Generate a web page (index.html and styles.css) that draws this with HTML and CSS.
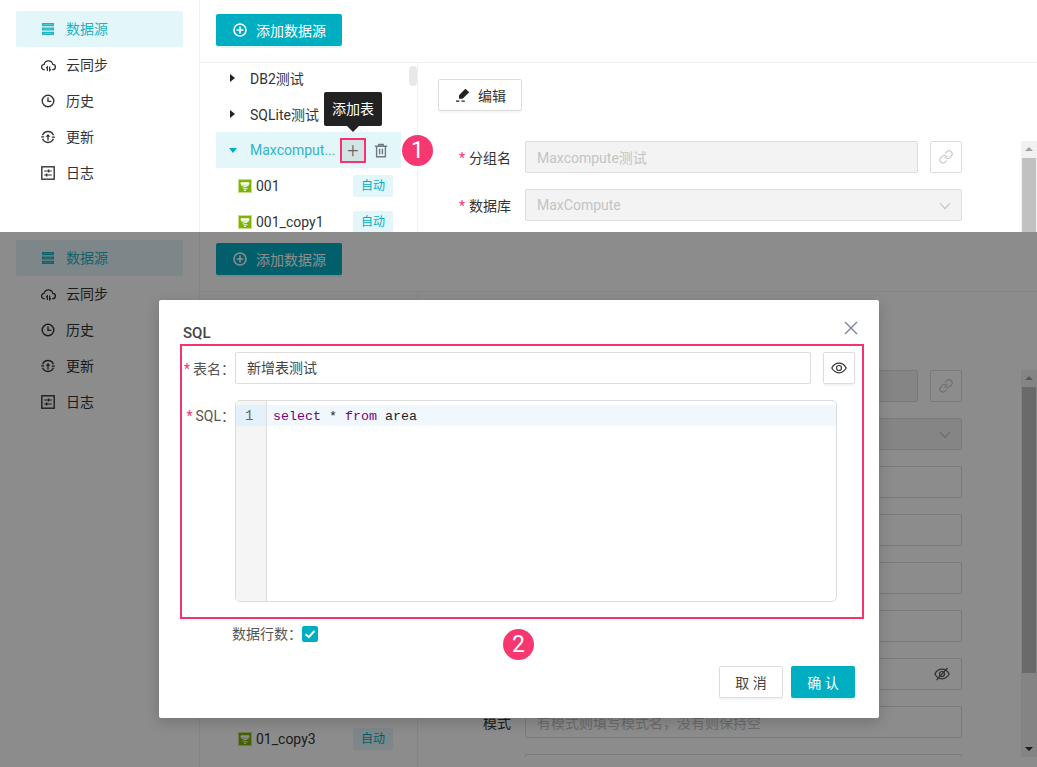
FILE: index.html
```html
<!DOCTYPE html>
<html lang="zh-CN">
<head>
<meta charset="utf-8">
<title>数据源</title>
<link rel="stylesheet" href="styles.css">
</head>
<body>
<svg class="defs" width="0" height="0" aria-hidden="true">
  <symbol id="i-db" viewBox="0 0 12 12"><path d="M0 0h12v3.2H0zM0 4.4h12v3.2H0zM0 8.8h12V12H0z" fill="currentColor"/><path d="M1.5 1.6h9M1.5 6h9M1.5 10.4h9" stroke="#fff" stroke-opacity=".35" stroke-width=".8"/></symbol>
  <symbol id="i-cloud" viewBox="0 0 16 14"><path d="M4 11.5H3.6A2.9 2.9 0 0 1 3.3 5.7 4.8 4.8 0 0 1 12.6 5.7a2.9 2.9 0 0 1-.2 5.8H12" fill="none" stroke="currentColor" stroke-width="1.4"/><path d="M6.8 13V8.5L5.4 9.8M9.2 8v4.5l1.4-1.3" fill="none" stroke="currentColor" stroke-width="1.3"/></symbol>
  <symbol id="i-clock" viewBox="0 0 14 14"><circle cx="7" cy="7" r="5.8" fill="none" stroke="currentColor" stroke-width="1.4"/><path d="M7 3.6V7.4H10.4" fill="none" stroke="currentColor" stroke-width="1.4"/></symbol>
  <symbol id="i-update" viewBox="0 0 14 14"><path d="M1.6 5.2A5.8 5.8 0 0 1 12.4 5.2M12.4 8.8A5.8 5.8 0 0 1 1.6 8.8" fill="none" stroke="currentColor" stroke-width="1.4"/><path d="M.2 6.8h3M10.8 7.2h3M7 10.6V5" fill="none" stroke="currentColor" stroke-width="1.3"/><path d="M4.6 6.8 7 4l2.4 2.8z" fill="currentColor"/></symbol>
  <symbol id="i-log" viewBox="0 0 14 14"><rect x=".8" y=".8" width="12.4" height="12.4" fill="none" stroke="currentColor" stroke-width="1.4"/><path d="M3.2 5h7.6M3.2 9h7.6" stroke="currentColor" stroke-width="1.2"/><path d="M7.6 3.6v2.8M5.6 7.6v2.8" stroke="currentColor" stroke-width="1.4"/></symbol>
  <symbol id="i-add" viewBox="0 0 14 14"><circle cx="7" cy="7" r="6" fill="none" stroke="currentColor" stroke-width="1.6"/><path d="M7 3.6v6.8M3.6 7h6.8" stroke="currentColor" stroke-width="1.6"/></symbol>
  <symbol id="i-table" viewBox="0 0 14 14"><rect width="14" height="14" fill="#c6e08a"/><rect x="1" y="1" width="12" height="12" fill="#7cb305"/><path d="M3 3.8h8v1.4H3zM3.4 6.2h7.2M4.6 8.2l5-1.2M5.4 9.8h4M6 11.4h2" fill="#fff" stroke="#fff" stroke-width="1"/></symbol>
  <symbol id="i-trash" viewBox="0 0 14 14"><path d="M.8 2.8h12.4M4.8 2.8V1h4.4v1.8" fill="none" stroke="currentColor" stroke-width="1.4"/><path d="M2.6 2.8v10.4h8.8V2.8" fill="none" stroke="currentColor" stroke-width="1.4"/><path d="M5.6 5.2v5.6M8.4 5.2v5.6" stroke="currentColor" stroke-width="1.4"/></symbol>
  <symbol id="i-pen" viewBox="0 0 14 14"><path d="M9.4.8 13.2 4.2 6.6 10.8H3V7.2z" fill="currentColor"/><path d="M0 13.2h3.4M5.4 13.2h3.4" stroke="currentColor" stroke-width="1.2"/></symbol>
  <symbol id="i-link" viewBox="0 0 16 16"><path d="M6.6 9.4 9.4 6.6M7.2 4.4l1.6-1.6a3 3 0 0 1 4.4 4.4l-1.6 1.6a3 3 0 0 1-3.4.6M8.8 11.6l-1.6 1.6a3 3 0 0 1-4.4-4.4l1.6-1.6a3 3 0 0 1 3.4-.6" fill="none" stroke="currentColor" stroke-width="1.2"/></symbol>
  <symbol id="i-chev" viewBox="0 0 12 8"><path d="M1 1l5 5.6L11 1" fill="none" stroke="currentColor" stroke-width="1.1"/></symbol>
  <symbol id="i-eye" viewBox="0 0 16 12"><path d="M.8 6C2.6 2.8 5 1.2 8 1.2S13.4 2.8 15.2 6C13.4 9.2 11 10.8 8 10.8S2.6 9.2.8 6z" fill="none" stroke="currentColor" stroke-width="1.2"/><circle cx="8" cy="6" r="2.5" fill="none" stroke="currentColor" stroke-width="1.2"/></symbol>
  <symbol id="i-eyeoff" viewBox="0 0 16 14"><path d="M.8 7C2.6 3.8 5 2.2 8 2.2S13.4 3.8 15.2 7C13.4 10.2 11 11.8 8 11.8S2.6 10.2.8 7z" fill="none" stroke="currentColor" stroke-width="1.2"/><circle cx="8" cy="7" r="2.5" fill="none" stroke="currentColor" stroke-width="1.2"/><path d="M13.5 .8 2.5 13.2" stroke="currentColor" stroke-width="1.2"/></symbol>
</svg>

<div class="frame frame-top">
  <div class="app">
    <aside class="side">
      <a class="nav nav-on"><svg class="nav-ic"><use href="#i-db"/></svg>数据源</a>
      <a class="nav"><svg class="nav-ic nav-wide"><use href="#i-cloud"/></svg>云同步</a>
      <a class="nav"><svg class="nav-ic"><use href="#i-clock"/></svg>历史</a>
      <a class="nav"><svg class="nav-ic"><use href="#i-update"/></svg>更新</a>
      <a class="nav"><svg class="nav-ic"><use href="#i-log"/></svg>日志</a>
    </aside>
    <main class="main">
      <div class="bar"><button class="btn-add"><svg class="add-ic"><use href="#i-add"/></svg>添加数据源</button></div>
      <div class="body">
        <section class="tree">
          <div class="tree-clip">
            <div class="row"><i class="caret"></i><span class="rname">DB2测试</span></div>
            <div class="row"><i class="caret"></i><span class="rname">SQLite测试</span></div>
            <div class="row row-on">
              <i class="caret caret-open"></i><span class="rname rname-on">Maxcomput...</span>
              <span class="act act-marked">+
                <span class="tip">添加表</span>
              </span>
              <svg class="trash"><use href="#i-trash"/></svg>
              <span class="num num-1">1</span>
            </div>
            <div class="row leaf"><svg class="tb"><use href="#i-table"/></svg><span class="lname">001</span><span class="tag">自动</span></div>
            <div class="row leaf"><svg class="tb"><use href="#i-table"/></svg><span class="lname">001_copy1</span><span class="tag">自动</span></div>
          </div>
          <span class="tree-thumb"></span>
        </section>
        <section class="detail">
          <button class="btn-edit"><svg class="pen"><use href="#i-pen"/></svg>编辑</button>
          <div class="form-wrap">
            <div class="form">
              <div class="frow"><label class="flabel"><b>*</b>分组名</label><div class="field dis grow">Maxcompute测试</div><span class="linkbtn"><svg class="link-ic"><use href="#i-link"/></svg></span></div>
              <div class="frow"><label class="flabel"><b>*</b>数据库</label><div class="field dis grow">MaxCompute<svg class="chev"><use href="#i-chev"/></svg></div></div>
            </div>
            <div class="sb"><i class="sb-up"></i><span class="sb-thumb"></span><i class="sb-down"></i></div>
          </div>
        </section>
      </div>
    </main>
  </div>
</div>

<div class="frame frame-bottom">
  <div class="app app-under">
    <aside class="side">
      <a class="nav nav-on"><svg class="nav-ic"><use href="#i-db"/></svg>数据源</a>
      <a class="nav"><svg class="nav-ic nav-wide"><use href="#i-cloud"/></svg>云同步</a>
      <a class="nav"><svg class="nav-ic"><use href="#i-clock"/></svg>历史</a>
      <a class="nav"><svg class="nav-ic"><use href="#i-update"/></svg>更新</a>
      <a class="nav"><svg class="nav-ic"><use href="#i-log"/></svg>日志</a>
    </aside>
    <main class="main">
      <div class="bar"><button class="btn-add"><svg class="add-ic"><use href="#i-add"/></svg>添加数据源</button></div>
      <div class="body">
        <section class="tree">
          <div class="tree-clip">
            <div class="row"></div><div class="row"></div><div class="row"></div>
            <div class="row"></div><div class="row"></div><div class="row"></div>
            <div class="row"></div><div class="row"></div><div class="row"></div>
            <div class="row"></div><div class="row"></div><div class="row"></div>
            <div class="row leaf"><svg class="tb"><use href="#i-table"/></svg><span class="lname">01_copy3</span><span class="tag">自动</span></div>
          </div>
        </section>
        <section class="detail">
          <div class="btn-space"></div>
          <div class="form-wrap">
            <div class="form">
              <div class="frow"><label class="flabel"></label><div class="field dis grow"></div><span class="linkbtn"><svg class="link-ic"><use href="#i-link"/></svg></span></div>
              <div class="frow"><label class="flabel"></label><div class="field dis grow"><svg class="chev"><use href="#i-chev"/></svg></div></div>
              <div class="frow"><label class="flabel"></label><div class="field grow"></div></div>
              <div class="frow"><label class="flabel"></label><div class="field grow"></div></div>
              <div class="frow"><label class="flabel"></label><div class="field grow"></div></div>
              <div class="frow"><label class="flabel"></label><div class="field grow"></div></div>
              <div class="frow"><label class="flabel"></label><div class="field grow"><svg class="eyeoff"><use href="#i-eyeoff"/></svg></div></div>
              <div class="frow"><label class="flabel">模式</label><div class="field grow ph">有模式则填写模式名，没有则保持空</div></div>
              <div class="frow"><label class="flabel"></label><div class="field grow"></div></div>
            </div>
            <div class="sb"><i class="sb-up"></i><span class="sb-thumb"></span><i class="sb-down"></i></div>
          </div>
        </section>
      </div>
    </main>
  </div>

  <div class="overlay">
    <div class="modal">
      <header class="m-head"><span class="m-title">SQL</span><svg class="m-close" viewBox="0 0 14 14"><path d="M1 1l12 12M13 1 1 13" fill="none" stroke="currentColor" stroke-width="1.3"/></svg></header>
      <div class="m-marked">
        <div class="m-row">
          <label class="m-label"><b>*</b>表名：</label>
          <div class="m-input">新增表测试</div>
          <span class="m-eye"><svg class="eye"><use href="#i-eye"/></svg></span>
        </div>
        <div class="m-row m-row-editor">
          <label class="m-label m-label-sql"><b>*</b>SQL：</label>
          <div class="editor">
            <div class="gutter"><span class="ln">1</span></div>
            <div class="code"><div class="line"><span class="kw">select</span> * <span class="kw">from</span> area</div></div>
          </div>
        </div>
      </div>
      <div class="m-check">
        <span>数据行数：</span>
        <span class="cb"><svg viewBox="0 0 16 16"><path d="M3.6 8.2 6.8 11l5.6-6" fill="none" stroke="#fff" stroke-width="2"/></svg></span>
        <span class="num num-2">2</span>
      </div>
      <footer class="m-foot"><button class="btn-cancel">取 消</button><button class="btn-ok">确 认</button></footer>
    </div>
  </div>
</div>
</body>
</html>
```

FILE: styles.css
```css
* { box-sizing: border-box; }
html, body { margin: 0; padding: 0; }
body {
  width: 1037px;
  height: 767px;
  overflow: hidden;
  background: #fff;
  font-family: Roboto, "Noto Sans CJK SC", sans-serif;
  font-size: 14px;
  color: #333;
}
.defs { position: absolute; }
svg { display: block; flex: none; }

.frame { position: relative; overflow: hidden; width: 1037px; }
.frame-top { height: 232px; }
.frame-bottom { height: 535px; }
.app { display: flex; width: 1037px; height: 538px; background: #fff; }
.app-under { margin-top: -3px; }

/* sidebar */
.side { width: 200px; flex: none; padding: 11px 16px 0; border-right: 1px solid #f0f0f0; }
.nav { display: flex; align-items: center; height: 36px; padding-left: 26px; gap: 12px; border-radius: 2px; color: #333; line-height: 36px; }
.nav-on { background: #e3f6f9; color: #1fb3c6; }
.nav-ic { width: 12px; height: 12px; margin-left: 0; }
.nav-wide { width: 15px; height: 13px; margin-left: -1px; margin-right: -2px; }
.nav:not(.nav-on) .nav-ic:not(.nav-wide) { width: 14px; height: 14px; margin-left: -1px; margin-right: -1px; }

/* main */
.main { flex: 1; display: flex; flex-direction: column; min-width: 0; }
.bar { height: 63px; flex: none; padding: 14px 16px 0; border-bottom: 1px solid #f0f0f0; }
.btn-add {
  display: flex; align-items: center; gap: 9px;
  height: 32px; width: 126px; padding: 0 0 0 17px;
  border: 0; border-radius: 2px;
  background: #00aec2; color: #fff;
  font: inherit; box-shadow: 0 2px 0 #e3f6f9;
}
.add-ic { width: 14px; height: 14px; }
.body { flex: 1; display: flex; min-height: 0; }

/* tree */
.tree { position: relative; width: 218px; flex: none; padding-left: 16px; border-right: 1px solid #f0f0f0; }
.tree-clip { display: flow-root; height: 456px; margin-top: 9px; margin-right: 16px; clip-path: inset(0 -60px 0 0); }
.tree-clip > .row:first-child { margin-top: -12px; }
.row { position: relative; display: flex; align-items: center; height: 36px; padding-left: 14px; color: #333; white-space: nowrap; }
.row-on { background: #e3f6f9; clip-path: none; }
.caret { width: 0; height: 0; margin-right: 15px; border-left: 5px solid #222; border-top: 4px solid transparent; border-bottom: 4px solid transparent; }
.caret-open { margin-left: -1px; margin-right: 13px; border-top: 5px solid #00aec2; border-left: 4.5px solid transparent; border-right: 4.5px solid transparent; border-bottom: 0; }
.rname-on { color: #34b3c5; width: 90px; }
.act { position: relative; display: flex; align-items: center; justify-content: center; width: 26px; height: 25px; font-size: 20px; font-weight: 300; line-height: 1; color: #666; }
.act-marked { background: #d3e4e7; border: 2px solid #f5336f; }
.tip { position: absolute; left: -18px; top: -48px; width: 58px; height: 34px; border-radius: 2px; background: #222; color: #fff; font-size: 14px; line-height: 34px; text-align: center; font-weight: 400; }
.tip::after { content: ""; position: absolute; left: 23px; top: 34px; border: 6px solid transparent; border-top-color: #222; border-bottom: 0; }
.trash { width: 14px; height: 15px; margin-left: 8px; color: #6f7b7e; }
.num { position: absolute; display: flex; align-items: center; justify-content: center; width: 31px; height: 31px; border-radius: 50%; background: #f7376f; color: #fff; font-size: 23px; line-height: 1; }
.num-1 { left: 186px; top: 3px; }
.leaf { padding-left: 22px; }
.tb { width: 14px; height: 14px; margin-right: 4px; }
.lname { flex: 1; color: #333; }
.tag { width: 40px; height: 22px; margin-right: 8px; border-radius: 2px; background: #e3f6f9; color: #00aec2; font-size: 12px; line-height: 22px; text-align: center; }
.tree-thumb { position: absolute; left: 209px; top: 3px; width: 8px; height: 20px; border-radius: 4px; background: #e8e8e8; }

/* detail */
.detail { flex: 1; min-width: 0; padding-top: 16px; }
.btn-edit { display: flex; align-items: center; gap: 8px; height: 32px; width: 84px; margin-left: 20px; padding: 0 0 0 17px; border: 1px solid #ddd; border-radius: 2px; background: #fff; font: inherit; color: #333; box-shadow: 0 2px 2px #f5f5f5; }
.btn-space { height: 32px; }
.pen { width: 14px; height: 14px; color: #222; }
.form-wrap { display: flex; height: 387px; margin-top: 30px; overflow: hidden; }
.form { flex: 1; min-width: 0; padding-right: 59px; }
.frow { display: flex; align-items: center; gap: 12px; height: 32px; margin-bottom: 16px; }
.flabel { width: 93px; flex: none; text-align: right; color: #333; white-space: nowrap; }
.flabel b { margin-right: 4px; color: #f5336f; font-weight: 400; }
.field { position: relative; display: flex; align-items: center; height: 32px; padding: 0 11px; margin-left: 2px; border: 1px solid #ddd; border-radius: 2px; background: #fff; }
.grow { flex: 1; min-width: 0; }
.dis { background: #f3f3f3; color: #c4c4c4; }
.ph { color: #c4c4c4; }
.linkbtn { display: flex; align-items: center; justify-content: center; width: 32px; height: 32px; flex: none; border: 1px solid #ddd; border-radius: 2px; background: #fff; color: #c9c9c9; }
.link-ic { width: 16px; height: 16px; }
.chev { position: absolute; right: 10px; top: 12px; width: 12px; height: 8px; color: #bdbdbd; }
.eyeoff { position: absolute; right: 11px; top: 8px; width: 16px; height: 14px; color: #555; }
.sb { position: relative; flex: none; width: 16px; height: 387px; background: #f1f1f1; }
.sb-up, .sb-down { position: absolute; left: 4px; width: 0; height: 0; border-left: 4px solid transparent; border-right: 4px solid transparent; }
.sb-up { top: 6px; border-bottom: 4px solid #a3a3a3; }
.sb-down { bottom: 6px; border-top: 4px solid #333; }
.sb-thumb { position: absolute; left: 1px; right: 1px; top: 17px; height: 286px; background: #c1c1c1; }

/* overlay + modal */
.overlay { position: absolute; inset: 0; display: flex; align-items: flex-start; padding: 68px 0 0 159px; background: rgba(0, 0, 0, .45); }
.modal { display: flex; flex-direction: column; width: 720px; height: 418px; padding: 0 24px 20px 21px; border-radius: 2px; background: #fff; box-shadow: 0 4px 14px rgba(0, 0, 0, .18); color: #555; }
.m-head { display: flex; justify-content: space-between; align-items: flex-start; height: 44px; padding: 21px 0 0 3px; }
.m-title { font-size: 15px; font-weight: 500; color: #444; line-height: 24px; }
.m-close { width: 14px; height: 14px; margin-right: -3px; color: #7a7f9a; }
.m-marked { width: 684px; height: 275px; padding: 6px 7px 0 0; border: 2px solid #f5336f; }
.m-row { display: flex; align-items: center; height: 32px; }
.m-row-editor { align-items: flex-start; height: 202px; margin-top: 16px; }
.m-label { width: 53px; flex: none; text-align: right; white-space: nowrap; }
.m-label b { margin-right: 3px; color: #f5336f; font-weight: 400; }
.m-label-sql { line-height: 32px; }
.m-input { flex: 1; height: 32px; padding: 0 11px; border: 1px solid #ddd; border-radius: 2px; line-height: 30px; color: #444; }
.m-eye { display: flex; align-items: center; justify-content: center; width: 32px; height: 32px; margin-left: 12px; border: 1px solid #ddd; border-radius: 2px; box-shadow: 0 2px 2px #f3f3f3; color: #333; }
.eye { width: 16px; height: 12px; }
.editor { display: flex; width: 602px; height: 202px; border: 1px solid #ddd; border-radius: 5px; overflow: hidden; }
.gutter { width: 31px; flex: none; padding-top: 4px; background: #f5f5f5; border-right: 1px solid #ddd; }
.ln { display: block; height: 21px; padding-left: 9px; background: #e2f1fb; color: #666; font-family: "Liberation Mono", monospace; font-size: 14px; line-height: 23px; }
.code { flex: 1; padding-top: 4px; }
.line { height: 21px; padding-left: 6px; background: #f0f8fd; color: #222; font-family: "Liberation Mono", monospace; font-size: 13.33px; line-height: 23px; white-space: pre; }
.kw { color: #708; }
.m-check { position: relative; display: flex; align-items: center; height: 16px; margin-top: 7px; padding-left: 52px; line-height: 16px; }
.cb { width: 16px; height: 16px; border-radius: 2px; background: #00aec2; }
.cb svg { width: 16px; height: 16px; }
.num-2 { left: 323px; top: 3px; }
.m-foot { display: flex; justify-content: flex-end; gap: 8px; margin-top: auto; }
.btn-cancel, .btn-ok { width: 64px; height: 32px; border-radius: 2px; font: inherit; padding: 0; }
.btn-cancel { border: 1px solid #ddd; background: #fff; color: #444; box-shadow: 0 2px 2px #f3f3f3; }
.btn-ok { border: 0; background: #00aec2; color: #fff; box-shadow: 0 2px 0 #e3f6f9; }
```
